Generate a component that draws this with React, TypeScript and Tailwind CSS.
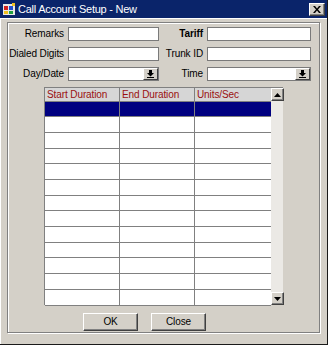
const rows = [15, 16, 16, 15, 16, 16, 15, 16, 16, 15, 16, 16, 16];

function DropButton() {
  return (
    <div className="w-[15px] h-[12px] bg-[#d4d0c8] border-t border-l border-white border-r border-b border-r-[#404040] border-b-[#404040] flex items-center justify-center">
      <svg width="7" height="8" viewBox="0 0 7 8">
        <path d="M2 0h3v3h2L3.5 6.5 0 3h2z" fill="#000" />
        <rect x="0" y="7" width="7" height="1" fill="#000" />
      </svg>
    </div>
  );
}

function Field({ width, drop }: { width: string; drop?: boolean }) {
  return (
    <div className={`${width} h-[14px] bg-white border border-[#7a7a7a] flex justify-end`}>
      {drop && <DropButton />}
    </div>
  );
}

function Label({ text, width, bold }: { text: string; width: string; bold?: boolean }) {
  return (
    <div className={`${width} flex justify-end whitespace-nowrap ${bold ? "font-bold" : ""}`}>
      <span>{text}</span>
    </div>
  );
}

function Bevel({ children, className }: { children?: React.ReactNode; className: string }) {
  return (
    <div className={`bg-[#d4d0c8] border-t border-l border-t-white border-l-white border-r border-b border-r-[#404040] border-b-[#404040] shadow-[inset_-1px_-1px_0_#808080] ${className}`}>
      {children}
    </div>
  );
}

export default function App() {
  return (
    <div className="w-[328px] h-[345px] bg-[#d4d0c8] border-r border-b border-[#1a1a1a] flex flex-col font-['Liberation_Sans',Arial,sans-serif] text-[10px] tracking-[-0.1px] text-black leading-none">
      <div className="h-[18px] bg-[#0a246a] flex items-center pl-[3px] pr-[2px] shrink-0">
        <svg width="13" height="13" viewBox="0 0 13 13">
          <rect x="0" y="1" width="12" height="11" fill="#e8e8e8" />
          <rect x="1" y="3" width="4" height="4" fill="#d02020" />
          <rect x="6" y="3" width="4" height="4" fill="#2050d0" />
          <rect x="1" y="8" width="4" height="3" fill="#f0c020" />
          <rect x="6" y="8" width="4" height="3" fill="#20a040" />
          <rect x="9" y="0" width="3" height="3" fill="#f0c020" />
        </svg>
        <span className="ml-[2px] text-white text-[11px] tracking-[-0.25px]">Call Account Setup - New</span>
        <Bevel className="ml-auto w-[16px] h-[13px] flex items-center justify-center">
          <svg width="8" height="7" viewBox="0 0 8 7">
            <path d="M0 0h2l2 2.5L6 0h2L5 3.5 8 7H6L4 4.5 2 7H0l3-3.5z" fill="#000" />
          </svg>
        </Bevel>
      </div>
      <div className="flex-1 border-l border-t border-white">
        <div className="mt-[3px] ml-[6px] w-[313px] h-[311px] border border-[#808080] shadow-[inset_1px_1px_0_#fff,1px_1px_0_#fff] pl-[4px] pt-[4px]">
          <div className="flex flex-col gap-[6px]">
            <div className="flex items-center">
              <Label text="Remarks" width="w-[52px]" />
              <div className="ml-[4px]"><Field width="w-[91px]" /></div>
              <Label text="Tariff" width="w-[44px]" bold />
              <div className="ml-[4px]"><Field width="w-[104px]" /></div>
            </div>
            <div className="flex items-center">
              <Label text="Dialed Digits" width="w-[52px]" />
              <div className="ml-[4px]"><Field width="w-[91px]" /></div>
              <Label text="Trunk ID" width="w-[44px]" />
              <div className="ml-[4px]"><Field width="w-[104px]" /></div>
            </div>
            <div className="flex items-center">
              <Label text="Day/Date" width="w-[52px]" />
              <div className="ml-[4px]"><Field width="w-[91px]" drop /></div>
              <Label text="Time" width="w-[44px]" />
              <div className="ml-[4px]"><Field width="w-[104px]" drop /></div>
            </div>
          </div>
          <div className="mt-[6px] ml-[32px] w-[239px] h-[218px] flex border-l border-t border-[#808080]">
            <div className="w-[226px] flex flex-col">
              <div className="h-[14px] shrink-0 flex bg-[#d6d6d6] border-b border-[#808080] text-[#9a1010]">
                <div className="w-[75px] border-r border-[#808080] pl-[2px] flex items-center">Start Duration</div>
                <div className="w-[75px] border-r border-[#808080] pl-[2px] flex items-center">End Duration</div>
                <div className="w-[76px] pl-[2px] flex items-center">Units/Sec</div>
              </div>
              {rows.map((h, i) => (
                <div
                  key={i}
                  className={`flex shrink-0 border-b border-[#808080] ${i === 0 ? "bg-[#000080]" : "bg-white"}`}
                  style={{ height: h }}
                >
                  <div className="w-[75px] border-r border-[#808080]" />
                  <div className="w-[75px] border-r border-[#808080]" />
                  <div className="w-[76px]" />
                </div>
              ))}
            </div>
            <div className="w-[13px] bg-[#ebe9e5] flex flex-col justify-between border-r border-[#d4d0c8]">
              <Bevel className="w-[13px] h-[13px] flex items-center justify-center">
                <svg width="7" height="4" viewBox="0 0 7 4"><path d="M3.5 0L7 4H0z" fill="#000" /></svg>
              </Bevel>
              <Bevel className="w-[13px] h-[13px] flex items-center justify-center">
                <svg width="7" height="4" viewBox="0 0 7 4"><path d="M0 0h7L3.5 4z" fill="#000" /></svg>
              </Bevel>
            </div>
          </div>
          <div className="mt-[8px] ml-[71px] flex gap-[13px]">
            <Bevel className="w-[55px] h-[18px] flex items-center justify-center">OK</Bevel>
            <Bevel className="w-[55px] h-[18px] flex items-center justify-center">Close</Bevel>
          </div>
        </div>
      </div>
    </div>
  );
}
